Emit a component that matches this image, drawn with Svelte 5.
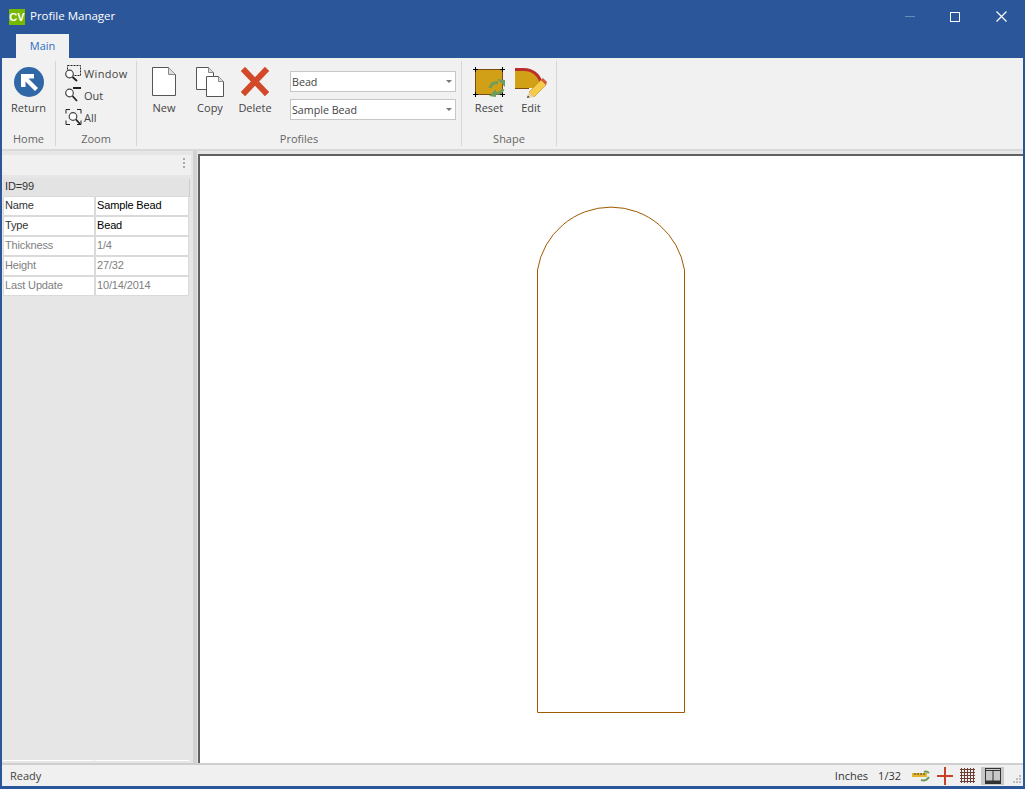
<script>
  let rows = [
    { name: "Name", value: "Sample Bead", on: true },
    { name: "Type", value: "Bead", on: true },
    { name: "Thickness", value: "1/4" },
    { name: "Height", value: "27/32" },
    { name: "Last Update", value: "10/14/2014" }
  ];
</script>

<div class="window">
  <header class="titlebar">
    <span class="logo">CV</span>
    <span class="title">Profile Manager</span>
    <div class="winbtns">
      <span class="min"></span>
      <span class="max"></span>
      <svg width="11" height="11" viewBox="0 0 11 11"><path d="M.5.5l10 10M10.5.5l-10 10" stroke="#fff" stroke-width="1.2" /></svg>
    </div>
  </header>

  <nav class="tabs"><span class="tab">Main</span></nav>

  <section class="ribbon">
    <div class="group home">
      <div class="items">
        <div class="big">
          <svg width="30" height="30" viewBox="0 0 30 30">
            <circle cx="15" cy="15" r="15" fill="#3067a6" />
            <path d="M7 7h13v4.500h-5.500L24 21l-3 3-9.500-9.500V20H7z" fill="#fff" />
          </svg>
          <span>Return</span>
        </div>
      </div>
      <div class="label">Home</div>
    </div>

    <div class="group zoom">
      <div class="stack">
        <div class="zitem wide">
          <svg width="17" height="17" viewBox="0 0 17 17">
            <rect x="2.500" y=".5" width="13" height="10" fill="none" stroke="#222" stroke-dasharray="2 1" />
            <circle cx="4.500" cy="9" r="3.800" fill="#fff" stroke="#444" stroke-width="1.200" />
            <path d="M7.500 12l4.500 4" stroke="#222" stroke-width="1.800" />
          </svg>
          <span>Window</span>
        </div>
        <div class="zitem">
          <svg width="17" height="17" viewBox="0 0 17 17">
            <path d="M8 1h8" stroke="#222" stroke-width="2" />
            <circle cx="4.500" cy="6" r="3.800" fill="#fff" stroke="#444" stroke-width="1.200" />
            <path d="M7.500 9l4.500 5" stroke="#222" stroke-width="1.800" />
          </svg>
          <span>Out</span>
        </div>
        <div class="zitem">
          <svg width="17" height="17" viewBox="0 0 17 17">
            <path d="M1 4.500V.5h4M12 .5h4v4M1 11.500v4h4M12 15.500h4v-4" fill="none" stroke="#222" />
            <circle cx="8" cy="7.500" r="3.800" fill="#fff" stroke="#444" stroke-width="1.200" />
            <path d="M11 10.500l4 4.500" stroke="#222" stroke-width="1.800" />
          </svg>
          <span>All</span>
        </div>
      </div>
      <div class="label">Zoom</div>
    </div>

    <div class="group profiles">
      <div class="items">
        <div class="big">
          <svg width="24" height="29" viewBox="0 0 24 29">
            <path d="M.5.5h16l7 7v21H.5z" fill="#fff" stroke="#555" />
            <path d="M16.500.5v7h7" fill="#ddd" stroke="#888" />
          </svg>
          <span>New</span>
        </div>
        <div class="big">
          <svg width="28" height="30" viewBox="0 0 28 30">
            <path d="M.5.5h12l5 5v17H.5z" fill="#fff" stroke="#555" />
            <path d="M12.500.5v5h5" fill="#ddd" stroke="#888" />
            <path d="M10.500 9.500h12l5 5v15h-17z" fill="#fff" stroke="#555" />
            <path d="M22.500 9.500v5h5" fill="#ddd" stroke="#888" />
          </svg>
          <span>Copy</span>
        </div>
        <div class="big">
          <svg width="28" height="29" viewBox="0 0 28 29">
            <path d="M4 4l20 21M24 4L4 25" stroke="#d2492a" stroke-width="6" stroke-linecap="square" />
          </svg>
          <span>Delete</span>
        </div>
        <div class="combos">
          <div class="combo">Bead<i></i></div>
          <div class="combo">Sample Bead<i></i></div>
        </div>
      </div>
      <div class="label">Profiles</div>
    </div>

    <div class="group shape">
      <div class="items">
        <div class="big">
          <svg width="32" height="30" viewBox="0 0 32 30">
            <rect x="2.500" y="2.500" width="27" height="25" fill="#d1a017" stroke="#7a4a10" />
            <path d="M0 2.500h5M2.500 0v5M27 2.500h5M29.500 0v5M0 27.500h5M2.500 25v5M27 27.500h5M29.500 25v5" stroke="#000" />
            <path d="M17 21c1-4 4-6 8-5" fill="none" stroke="#6e9c5e" stroke-width="3" />
            <path d="M24 12l8 1v7z" fill="#6e9c5e" />
            <path d="M30 22c-1 3-4 5-8 4" fill="none" stroke="#6e9c5e" stroke-width="3" />
            <path d="M23 22v8l-7-1z" fill="#6e9c5e" />
          </svg>
          <span>Reset</span>
        </div>
        <div class="big">
          <svg width="32" height="32" viewBox="0 0 32 32">
            <path d="M0 2h9c8 0 15 6 16 14v5H0z" fill="#d1a017" />
            <path d="M0 21.500h14" stroke="#7a4a10" />
            <path d="M0 2.500h9c8 0 15 5 17 13" fill="none" stroke="#b9302a" stroke-width="3" />
            <path d="M14 25l12-12 5 5-12 12z" fill="#f6cb4b" stroke="#b98a20" stroke-width=".6" />
            <path d="M26 13l2-2 4 4-1 3z" fill="#d05a3a" />
            <path d="M12 31l2-6 5 5z" fill="#e8d3a8" />
            <path d="M12 31l.8-2.500 1.800 1.800z" fill="#333" />
          </svg>
          <span>Edit</span>
        </div>
      </div>
      <div class="label">Shape</div>
    </div>
  </section>

  <main class="body">
    <aside class="side">
      <div class="sidebar-head"><span class="grip"></span></div>
      <div class="grid">
        <div class="idrow">ID=99</div>
        {#each rows as r}
          <div class="row" class:on={r.on}>
            <div class="cell">{r.name}</div>
            <div class="cell val">{r.value}</div>
          </div>
        {/each}
      </div>
      <div class="side-end"><span></span><span></span></div>
    </aside>
    <div class="canvas">
      <svg width="825" height="607" viewBox="0 0 825 607">
        <path d="M337.500 114a74.400 74.400 0 0 1 147 0V556.500h-147z" fill="none" stroke="#a05a00" />
      </svg>
    </div>
  </main>

  <footer class="status">
    <span class="ready">Ready</span>
    <span class="s1">Inches</span>
    <span class="s2">1/32</span>
    <svg class="ic" width="18" height="12" viewBox="0 0 18 12">
      <rect x="0" y="3" width="15" height="4" fill="#e3b52b" />
      <path d="M3 3v2M6 3v2M9 3v2M12 3v2" stroke="#444" />
      <path d="M9 10c3 1 6 0 8-3M12 2c2-1 4 0 5 1" fill="none" stroke="#6e9c5e" stroke-width="2" />
    </svg>
    <svg class="ic" width="16" height="18" viewBox="0 0 16 18">
      <path d="M8 0v18M0 9h16" stroke="#c9402a" stroke-width="2" />
    </svg>
    <svg class="ic grid-ic" width="15" height="15" viewBox="0 0 15 15">
      <path d="M0 1.500h15M0 4.500h15M0 7.500h15M0 10.500h15M0 13.500h15M1.500 0v15M4.500 0v15M7.500 0v15M10.500 0v15M13.500 0v15" stroke="#6b3f35" />
    </svg>
    <span class="layout">
      <svg width="16" height="16" viewBox="0 0 16 16">
        <rect x=".5" y=".5" width="15" height="15" fill="none" stroke="#333" />
        <path d="M0 2.500h16M8 2v12" stroke="#333" />
        <path d="M0 14h16" stroke="#333" stroke-width="3" />
      </svg>
    </span>
    <svg class="resize" width="10" height="10" viewBox="0 0 10 10">
      <path d="M7 1h2v2H7zM4 4h2v2H4zM7 4h2v2H7zM1 7h2v2H1zM4 7h2v2H4zM7 7h2v2H7z" fill="#bbb" />
    </svg>
  </footer>
</div>

<style>
  :global(body) {
    margin: 0;
    overflow: hidden;
  }

  .window {
    width: 1025px;
    height: 789px;
    box-sizing: border-box;
    display: flex;
    flex-direction: column;
    background: #2b579a;
    padding: 0 2px 3px 2px;
    font-family: "Open Sans", "Noto Sans", sans-serif;
    font-size: 11px;
    color: #444;
  }

  .titlebar {
    height: 33px;
    flex: none;
    display: flex;
    align-items: center;
    color: #fff;
    margin-left: 7px;
  }
  .logo {
    width: 16px;
    height: 16px;
    background: #76b900;
    color: #fff;
    font: bold 11px/16px "Liberation Sans", sans-serif;
    text-align: center;
    margin-right: 5px;
  }
  .title {
    font-size: 11.5px;
    position: relative;
    top: -1px;
  }
  .winbtns {
    margin-left: auto;
    display: flex;
    align-items: center;
    margin-right: 16px;
  }
  .min {
    width: 10px;
    height: 1px;
    background: #6a8cbd;
    margin-right: 35px;
  }
  .max {
    width: 8px;
    height: 8px;
    border: 1px solid #fff;
    margin-right: 36px;
  }

  .tabs {
    height: 25px;
    flex: none;
    display: flex;
    padding-left: 14px;
    align-items: flex-end;
  }
  .tab {
    width: 53px;
    height: 24px;
    background: #f1f1f1;
    color: #2b6cc4;
    text-align: center;
    line-height: 24px;
    box-sizing: border-box;
  }

  .ribbon {
    height: 93px;
    flex: none;
    background: #f1f1f1;
    border-bottom: 2px solid #d9d9d9;
    display: flex;
    box-sizing: border-box;
  }
  .group {
    margin: 3px 0;
    border-right: 1px solid #d6d6d6;
    display: flex;
    flex-direction: column;
    box-sizing: border-box;
  }
  .home { width: 54px; }
  .zoom { width: 81px; }
  .profiles { width: 325px; }
  .shape { width: 95px; }

  .items {
    height: 69px;
    display: flex;
    padding-top: 6px;
    box-sizing: border-box;
  }
  .label {
    text-align: center;
    color: #666;
    height: 16px;
    line-height: 18px;
  }
  .big {
    display: flex;
    flex-direction: column;
    align-items: center;
    justify-content: space-between;
    height: 48px;
  }
  .big span { line-height: 14px; }

  .home .items { justify-content: center; }

  .stack {
    height: 69px;
    padding: 4px 0 0 9px;
    box-sizing: border-box;
    display: flex;
    flex-direction: column;
    gap: 5px;
  }
  .zitem {
    display: flex;
    align-items: center;
    gap: 2px;
  }
  .zitem.wide span { letter-spacing: .35px; }

  .profiles .items { padding-left: 14px; }
  .profiles .big:nth-child(1) { width: 26px; margin-right: 18px; }
  .profiles .big:nth-child(2) { width: 30px; margin-right: 13px; }
  .profiles .big:nth-child(3) { width: 34px; }
  .combos {
    margin-left: 18px;
    display: flex;
    flex-direction: column;
    gap: 7px;
    padding-top: 4px;
  }
  .combo {
    width: 166px;
    height: 21px;
    box-sizing: border-box;
    background: #fff;
    border: 1px solid #c6c6c6;
    line-height: 21px;
    padding-left: 1px;
    position: relative;
    font-size: 10.7px;
  }
  .combo i {
    position: absolute;
    right: 3px;
    top: 8px;
    border: 3px solid transparent;
    border-top: 3px solid #777;
  }

  .shape .items { padding-left: 11px; gap: 10px; }

  .body {
    flex: 1;
    min-height: 0;
    display: flex;
    background: #e6e6e6;
    border-bottom: 2px solid #cfcfcf;
  }
  .side {
    width: 191px;
    flex: none;
    border-right: 4px solid #d2d2d2;
    display: flex;
    flex-direction: column;
  }
  .sidebar-head {
    height: 20px;
    margin: 4px 2px 0 0;
    background: #f0f0f0;
    position: relative;
  }
  .grip {
    position: absolute;
    right: 6px;
    top: 3px;
    width: 2px;
    height: 10px;
    background: repeating-linear-gradient(#aaa 0 2px, transparent 2px 4px);
  }
  .grid {
    margin: 3px 5px 0 2px;
    font-family: "Liberation Sans", sans-serif;
    font-size: 11px;
    letter-spacing: -.15px;
    color: #808080;
  }
  .idrow {
    height: 18px;
    line-height: 17px;
    margin: 0 -1px 1px;
    background: #e3e3e3;
    box-shadow: 1px 1px 0 #ccc;
    padding-left: 2px;
    color: #333;
  }
  .row {
    display: grid;
    grid-template-columns: 90px 1fr;
    gap: 2px;
    margin-bottom: 2px;
  }
  .cell {
    background: #fff;
    height: 18px;
    line-height: 17px;
    padding-left: 1px;
    box-shadow: 0 0 0 1px #dadada;
  }
  .row.on .cell:first-child { color: #333; }
  .row.on .val { color: #000; }
  .side-end {
    margin: auto 4px 2px 1px;
    display: grid;
    grid-template-columns: 91px 1fr;
    gap: 1px;
  }
  .side-end span {
    height: 1px;
    background: #fff;
  }

  .canvas {
    flex: 1;
    min-width: 0;
    margin: 3px 0 0 1px;
    background: #fff;
    border-left: 2px solid #606060;
    border-top: 2px solid #606060;
    box-sizing: border-box;
    overflow: hidden;
  }
  .canvas svg { display: block; }

  .status {
    height: 21px;
    flex: none;
    background: #f0f0f0;
    display: flex;
    align-items: center;
    color: #333;
  }
  .ready { margin-left: 8px; margin-right: auto; color: #444; }
  .s1 { margin-right: 10px; }
  .s2 { margin-right: 11px; }
  .ic { margin-right: 7px; }
  .ic.grid-ic { margin-right: 6px; }
  .layout {
    width: 23px;
    height: 18px;
    background: #c8c8c8;
    display: flex;
    align-items: center;
    justify-content: center;
    margin-right: 8px;
  }
  .resize { margin-right: 1px; margin-top: 6px; }
</style>
